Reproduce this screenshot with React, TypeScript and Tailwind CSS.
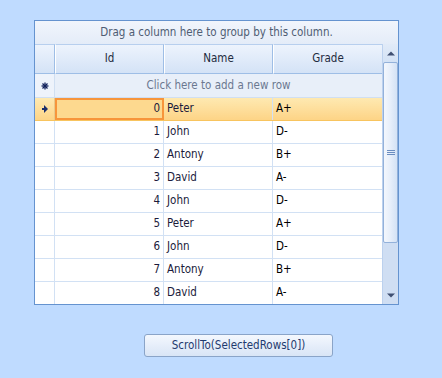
import React from "react";

const rows = [
  { id: 0, name: "Peter", grade: "A+" },
  { id: 1, name: "John", grade: "D-" },
  { id: 2, name: "Antony", grade: "B+" },
  { id: 3, name: "David", grade: "A-" },
  { id: 4, name: "John", grade: "D-" },
  { id: 5, name: "Peter", grade: "A+" },
  { id: 6, name: "John", grade: "D-" },
  { id: 7, name: "Antony", grade: "B+" },
  { id: 8, name: "David", grade: "A-" },
];

const font = { fontFamily: '"DejaVu Sans Condensed", "DejaVu Sans", Tahoma, sans-serif' };

function Arrow() {
  return (
    <svg width="6" height="8" viewBox="0 0 6 8">
      <path d="M0 3 H2 V0 L6 4 L2 8 V5 H0 Z" fill="#1b2e6b" />
    </svg>
  );
}

function Star() {
  return (
    <svg width="8" height="8" viewBox="0 0 8 8">
      <g stroke="#10205a" strokeWidth="1.3">
        <line x1="4" y1="0.5" x2="4" y2="7.5" />
        <line x1="0.5" y1="4" x2="7.5" y2="4" />
        <line x1="1.5" y1="1.5" x2="6.5" y2="6.5" />
        <line x1="6.5" y1="1.5" x2="1.5" y2="6.5" />
      </g>
    </svg>
  );
}

export default function App() {
  return (
    <div className="min-h-screen bg-[#bfdbff] pt-[20px] pl-[34px] text-[11.5px]" style={font}>
      <div className="w-[365px] h-[285px] border border-[#6593cf] flex flex-col bg-white overflow-hidden">
        <div className="h-[23px] shrink-0 flex items-center justify-center bg-gradient-to-b from-[#f1f5fc] to-[#e4ecf8] text-[#4f5d73]">
          Drag a column here to group by this column.
        </div>
        <div className="flex flex-1 min-h-0">
          <div className="w-[347px] flex flex-col">
            <div className="h-[30px] shrink-0 flex bg-gradient-to-b from-[#eef4fd] to-[#d3e2f6] text-[#1e2b40]">
              <div className="w-[20px] border-r border-b border-[#9ebee6] border-t border-t-[#b7cfee]" />
              <div className="w-[109px] flex items-center justify-center border-r border-b border-[#9ebee6] border-t border-t-[#b7cfee] border-l border-l-white">Id</div>
              <div className="w-[109px] flex items-center justify-center border-r border-b border-[#9ebee6] border-t border-t-[#b7cfee] border-l border-l-white">Name</div>
              <div className="w-[109px] flex items-center justify-center border-b border-[#9ebee6] border-t border-t-[#b7cfee] border-l border-l-white">Grade</div>
            </div>
            <div className="h-[24px] shrink-0 flex bg-[#e8eff9] border-b border-[#d0dff2]">
              <div className="w-[20px] flex items-center justify-center border-r border-[#d0dff2] bg-[#eef3fb]">
                <Star />
              </div>
              <div className="flex-1 flex items-center justify-center text-[#6b7890]">Click here to add a new row</div>
            </div>
            {rows.map((r, i) => {
              const sel = i === 0;
              return (
                <div
                  key={r.id}
                  className={
                    sel
                      ? "h-[23px] shrink-0 flex bg-gradient-to-b from-[#fee9b1] to-[#fdd486] border-b border-[#f8c45e] text-[#1b1b3b]"
                      : "h-[23px] shrink-0 flex border-b border-[#d2e1f4] text-[#1b1b3b]"
                  }
                >
                  <div
                    className={
                      sel
                        ? "w-[20px] flex items-center justify-center border-r border-[#e9c98a]"
                        : "w-[20px] border-r border-[#d2e1f4]"
                    }
                  >
                    {sel && <Arrow />}
                  </div>
                  <div
                    className={
                      sel
                        ? "w-[109px] flex items-center justify-end pr-[2px] border-2 border-[#f7953b] bg-[#fdd98f]"
                        : "w-[109px] flex items-center justify-end pr-[3px] border-r border-[#d2e1f4]"
                    }
                  >
                    {r.id}
                  </div>
                  <div className="w-[109px] flex items-center pl-[3px] border-r border-[#d2e1f4]">{r.name}</div>
                  <div className="w-[109px] flex items-center pl-[3px] text-black">{r.grade}</div>
                </div>
              );
            })}
          </div>
          <div className="w-[16px] flex flex-col bg-[#cfdef3] border-l border-[#bcd1ee]">
            <div className="h-[18px] shrink-0 flex items-center justify-center bg-gradient-to-b from-[#e1ebf8] to-[#d3e2f5]">
              <svg width="8" height="5" viewBox="0 0 8 5">
                <path d="M0 4.5 L4 0.5 L8 4.5 Z" fill="#3f4f72" />
              </svg>
            </div>
            <div className="h-[181px] shrink-0 mx-0 border border-[#93b1da] rounded-[2px] bg-gradient-to-r from-[#f3f7fd] via-[#e6eefa] to-[#d4e2f5] flex items-center justify-center">
              <svg width="8" height="5" viewBox="0 0 8 5">
                <g stroke="#6b8dc0" strokeWidth="1">
                  <line x1="0" y1="0.5" x2="8" y2="0.5" />
                  <line x1="0" y1="2.5" x2="8" y2="2.5" />
                  <line x1="0" y1="4.5" x2="8" y2="4.5" />
                </g>
              </svg>
            </div>
            <div className="flex-1" />
            <div className="h-[18px] shrink-0 flex items-center justify-center">
              <svg width="8" height="5" viewBox="0 0 8 5">
                <path d="M0 0.5 L8 0.5 L4 4.5 Z" fill="#3f4f72" />
              </svg>
            </div>
          </div>
        </div>
      </div>
      <div className="mt-[29px] ml-[110px] w-[189px] h-[23px] rounded-[3px] border border-[#8aa4c8] bg-gradient-to-b from-[#f4f8fe] via-[#e6eefa] to-[#d9e5f6] flex items-center justify-center text-[#1f3a6e] text-[11.5px]">
        ScrollTo(SelectedRows[0])
      </div>
    </div>
  );
}
